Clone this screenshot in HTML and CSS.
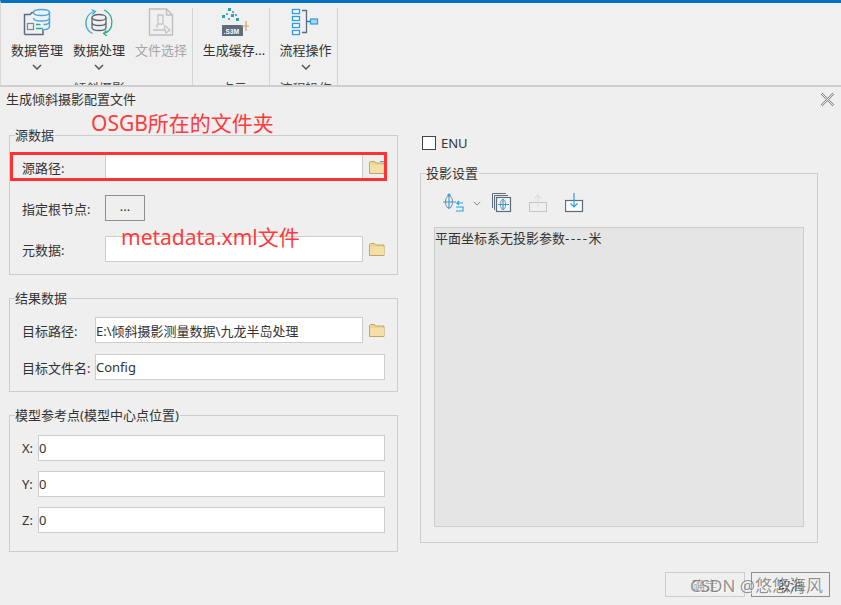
FILE: index.html
```html
<!DOCTYPE html>
<html lang="zh-CN">
<head>
<meta charset="utf-8">
<title>生成倾斜摄影配置文件</title>
<link rel="stylesheet" href="styles.css">
</head>
<body>
<div class="page">
  <header class="ribbon">
    <section class="rgroup g1">
      <div class="rbtns">
        <div class="rbtn">
          <svg class="ricon" viewBox="0 0 30 28"><path d="M2.500 26.500V6.500H8l2-2h6v3M2.500 26.500H21V15" fill="#f0f0f0" stroke="#5b6b80" stroke-width="1.500"/><rect x="5.500" y="15.500" width="6" height="6" fill="none" stroke="#7b8797" stroke-width="1.200"/><path d="M14 16.500h7M14 20.500h7" stroke="#27ae8f" stroke-width="1.400"/><path d="M11.500 4.500c0-4 16-4 16 0v14c0 2-3 3-6 3.200" fill="#f0f0f0" stroke="#42a9e0" stroke-width="1.400"/><path d="M11.500 4.500c0 4 16 4 16 0M11.500 10c0 4 16 4 16 0M21.500 16.500c3 0 6-1 6-3" fill="none" stroke="#42a9e0" stroke-width="1.400"/></svg>
          <span class="rlabel">数据管理</span>
          <svg class="chev" viewBox="0 0 10 6"><path d="M1 1l4 4 4-4" fill="none" stroke="#555" stroke-width="1.500"/></svg>
        </div>
        <div class="rbtn">
          <svg class="ricon" viewBox="0 0 30 28"><path d="M10 3.500C3 6 .5 13 2.500 19c1 3 3 5 6 6.500" fill="none" stroke="#42a9e0" stroke-width="1.300"/><path d="M7.500 1.500l4 2-3 3" fill="none" stroke="#42a9e0" stroke-width="1.300"/><path d="M20 2c7 3 9 10 7.500 16-1 3.500-3.500 6-7 7.500" fill="none" stroke="#27ae8f" stroke-width="1.300"/><path d="M23 28l-3.500-2.500 3-3" fill="none" stroke="#27ae8f" stroke-width="1.300"/><ellipse cx="15" cy="9.500" rx="7" ry="3" fill="none" stroke="#5b6570" stroke-width="1.300"/><path d="M8 9.500v10c0 4 14 4 14 0v-10M8 14.500c0 4 14 4 14 0" fill="none" stroke="#5b6570" stroke-width="1.300"/></svg>
          <span class="rlabel">数据处理</span>
          <svg class="chev" viewBox="0 0 10 6"><path d="M1 1l4 4 4-4" fill="none" stroke="#555" stroke-width="1.500"/></svg>
        </div>
        <div class="rbtn">
          <svg class="ricon" viewBox="0 0 30 28"><path d="M3.500 1h17l6 6v20h-23zM20.500 1v6h6" fill="none" stroke="#bdbdbd" stroke-width="1.300"/><path d="M12 7h5v9h-5zM11 16v4M7 22h13M18 17l6 5-4 3-2-6" fill="none" stroke="#c4c4c4" stroke-width="1.300"/></svg>
          <span class="rlabel off">文件选择</span>
        </div>
      </div>
      <span class="rname">倾斜摄影</span>
    </section>
    <section class="rgroup g2">
      <div class="rbtns">
        <div class="rbtn wide">
          <svg class="ricon" viewBox="0 0 30 28"><g fill="#2aa79b"><rect x="9" y="0" width="3" height="3"/><rect x="3" y="7" width="3" height="3"/><rect x="12" y="6" width="3" height="3"/><rect x="17" y="10" width="3" height="3"/></g><g fill="#5aa9dc"><rect x="7" y="5" width="2" height="2"/><rect x="16" y="6" width="2" height="2"/><rect x="9" y="10" width="2" height="2"/><rect x="13" y="3" width="2" height="2"/></g><rect x="3" y="17" width="21" height="11" fill="#5d6b7b"/><text x="4.500" y="26" class="s3m">.S3M</text><path d="M27 13v10M22 18h10" stroke="#c9a36e" stroke-width="1.200"/></svg>
          <span class="rlabel">生成缓存...</span>
        </div>
      </div>
      <span class="rname">点云</span>
    </section>
    <section class="rgroup g3">
      <div class="rbtns">
        <div class="rbtn">
          <svg class="ricon" viewBox="0 0 30 28"><g fill="#fff" stroke="#2a9fe0" stroke-width="1.300"><rect x="1.500" y="1.500" width="7" height="4"/><rect x="1.500" y="8.500" width="7" height="4"/><rect x="1.500" y="15.500" width="7" height="4"/><rect x="1.500" y="22.500" width="7" height="4"/></g><path d="M11 2.500h4.500v22H11M15.500 13.500h4" fill="none" stroke="#5d6b7b" stroke-width="1.300"/><rect x="19.500" y="11" width="7" height="5" fill="#a9d6ee" stroke="#2a9fe0" stroke-width="1.200"/></svg>
          <span class="rlabel">流程操作</span>
          <svg class="chev" viewBox="0 0 10 6"><path d="M1 1l4 4 4-4" fill="none" stroke="#555" stroke-width="1.500"/></svg>
        </div>
      </div>
      <span class="rname">流程操作</span>
    </section>
  </header>

  <main class="dialog">
    <div class="titlebar">
      <span>生成倾斜摄影配置文件</span>
      <svg class="close" viewBox="0 0 15 15"><path d="M1.500 1.500l12 12M13.500 1.500l-12 12" stroke="#8a8a8a" stroke-width="2.400"/><path d="M1.500 1.500l12 12M13.500 1.500l-12 12" stroke="#f5f5f5" stroke-width=".9"/></svg>
    </div>

    <div class="columns">
      <div class="left">
        <section class="group src">
          <h2 class="gtitle">源数据</h2>
          <div class="row"><label class="lab w83">源路径:</label><input class="field" type="text"><svg class="folder" viewBox="0 0 16 14"><path d="M.5 13.500V2.500l1-1h4l1 1.500h8.500v10.500z" fill="#f0d68f" stroke="#bfa56b"/><path d="M1 5h14v8H1z" fill="#f4dfa6"/><path d="M11 1h4v1h-4z" fill="#3ab0e6"/></svg></div>
          <div class="row"><label class="lab w83">指定根节点:</label><button class="dots" type="button">...</button></div>
          <div class="row"><label class="lab w83">元数据:</label><input class="field" type="text"><svg class="folder" viewBox="0 0 16 14"><path d="M.5 13.500V2.500l1-1h4l1 1.500h8.500v10.500z" fill="#f0d68f" stroke="#bfa56b"/><path d="M1 5h14v8H1z" fill="#f4dfa6"/></svg></div>
        </section>
        <section class="group res">
          <h2 class="gtitle">结果数据</h2>
          <div class="row"><label class="lab w73">目标路径:</label><input class="field" type="text" value="E:\倾斜摄影测量数据\九龙半岛处理"><svg class="folder" viewBox="0 0 16 14"><path d="M.5 13.500V2.500l1-1h4l1 1.500h8.500v10.500z" fill="#f0d68f" stroke="#bfa56b"/><path d="M1 5h14v8H1z" fill="#f4dfa6"/></svg></div>
          <div class="row"><label class="lab w73">目标文件名:</label><input class="field" type="text" value="Config"></div>
        </section>
        <section class="group ref">
          <h2 class="gtitle">模型参考点(模型中心点位置)</h2>
          <div class="row"><label class="lab w16">X:</label><input class="field" type="text" value="0"></div>
          <div class="row"><label class="lab w16">Y:</label><input class="field" type="text" value="0"></div>
          <div class="row"><label class="lab w16">Z:</label><input class="field" type="text" value="0"></div>
        </section>
      </div>

      <div class="right">
        <div class="enu"><span class="check"></span><span>ENU</span></div>
        <section class="group proj">
          <h2 class="gtitle">投影设置</h2>
          <div class="tools">
            <svg class="tool t1" viewBox="0 0 22 20"><ellipse cx="6" cy="9" rx="3.500" ry="6" fill="none" stroke="#8a8f96" stroke-width="1.100"/><path d="M6 1v15M0 9h13M4.500 2.500L6 1l1.500 1.500" fill="none" stroke="#2a9fe0" stroke-width="1.100"/><path d="M20 10h-6l2-2M14 10l2 2M13 14h7v4h-7" fill="none" stroke="#2a9fe0" stroke-width="1.100"/></svg>
            <svg class="toolchev" viewBox="0 0 10 6"><path d="M1 1l4 4 4-4" fill="none" stroke="#777" stroke-width="1.100"/></svg>
            <svg class="tool t2" viewBox="0 0 20 20"><path d="M14 .5H.5V15" fill="none" stroke="#5d6b7b"/><path d="M16 2.500H2.500V17" fill="none" stroke="#5d6b7b"/><rect x="4.500" y="4.500" width="14" height="14" fill="#f4f4f4" stroke="#5d6b7b" stroke-width="1.200"/><ellipse cx="11" cy="11.500" rx="2.500" ry="5" fill="none" stroke="#8a8f96"/><path d="M11 6v11M6 11.500h11" fill="none" stroke="#2a9fe0" stroke-width="1.200"/></svg>
            <svg class="tool t3" viewBox="0 0 20 20"><rect x=".5" y="9.500" width="17" height="9" fill="none" stroke="#c4c4c4"/><path d="M9 14V2M5.500 5.500L9 2l3.500 3.500" fill="none" stroke="#dcdcdc" stroke-width="1.200"/></svg>
            <svg class="tool t4" viewBox="0 0 20 20"><rect x=".5" y="7.500" width="17" height="11" fill="#fbfbfb" stroke="#5d6b7b" stroke-width="1.200"/><path d="M9 0v14M5.500 10.500L9 14l3.500-3.500" fill="none" stroke="#2a9fe0" stroke-width="1.200"/></svg>
          </div>
          <div class="info">平面坐标系无投影参数<span class="dash">----</span>米</div>
        </section>
      </div>
    </div>

    <footer class="footer">
      <button class="btn off" type="button">确定</button>
      <button class="btn" type="button">取消</button>
    </footer>
  </main>

  <div class="note n-osgb">OSGB所在的文件夹</div>
  <div class="note n-meta">metadata.xml文件</div>
  <div class="redbox"></div>
  <div class="mark">CSDN @悠悠海风</div>
</div>
</body>
</html>
```
FILE: styles.css
```css
* { box-sizing: border-box; }
html, body { margin: 0; padding: 0; }
body {
  font-family: "Noto Sans", "Noto Sans CJK SC", sans-serif;
  font-size: 13px;
  color: #333;
  background: #efefef;
}
.page { position: relative; width: 841px; height: 605px; overflow: hidden; }

/* ribbon */
.ribbon {
  display: flex;
  height: 87px;
  padding-top: 5px;
  background: #f0f0f0;
  border-top: 3px solid #0072c6;
  border-bottom: 2px solid #cfcfcf;
  border-left: 1px solid #d8d8d8;
  overflow: hidden;
}
.rgroup {
  display: flex;
  flex-direction: column;
  align-items: center;
  border-right: 1px solid #d4d4d4;
  height: 85px;
}
.g1 { width: 192px; padding-left: 5px; }
.g2 { width: 77px; padding-left: 6px; }
.g3 { width: 68px; padding-left: 4px; }
.rbtns { display: flex; flex: none; height: 71px; }
.rbtn { display: flex; flex-direction: column; align-items: center; width: 62px; }
.rbtn.wide { width: 70px; }
.ricon { width: 30px; height: 28px; flex: none; }
.rlabel { line-height: 18px; margin-top: 5px; white-space: nowrap; }
.rlabel.off { color: #a6a6a6; }
.chev { width: 10px; height: 6px; margin-top: 5px; }
.rname { flex: none; line-height: 18px; color: #444; white-space: nowrap; }
.s3m { font: 700 6.500px "Liberation Sans", sans-serif; fill: #fff; letter-spacing: .2px; }

/* dialog */
.titlebar {
  display: flex;
  justify-content: space-between;
  align-items: center;
  height: 25px;
  padding: 0 6px;
  line-height: 25px;
}
.titlebar span { margin-top: -1px; }
.close { width: 15px; height: 15px; }
.columns { display: flex; padding-left: 9px; }
.left { display: flex; flex-direction: column; gap: 23px; width: 389px; padding-top: 23px; }
.right { width: 398px; margin-left: 22px; padding-top: 24px; }

.group { border: 1px solid #cdcdcd; padding: 0 12px; }
.gtitle {
  width: fit-content;
  margin: -10px 0 0 -7px;
  padding: 0 1px 0 0;
  height: 18px;
  line-height: 18px;
  font-size: 13px;
  font-weight: 400;
  background: #efefef;
}
.row { display: flex; align-items: center; height: 26px; }
.lab { flex: none; white-space: nowrap; }
.w83 { width: 83px; }
.w73 { width: 73px; }
.w16 { width: 16px; }
.field {
  flex: 1;
  min-width: 0;
  height: 26px;
  padding: 0;
  border: 1px solid #cdcdcd;
  background: #fff;
  color: #333;
  font: 13px "Noto Sans", "Noto Sans CJK SC", sans-serif;
}
.folder { flex: none; width: 16px; height: 14px; margin-left: 6px; }
.dots {
  width: 40px;
  height: 26px;
  padding: 0 0 4px;
  border: 1px solid #8f8f8f;
  background: #efefef;
  color: #333;
  font: 13px "Noto Sans", sans-serif;
}

.gtitle + .row { margin-top: 10px; }
.src { height: 140px; }
.src .row + .row { margin-top: 15px; }
.res { height: 94px; }
.res .row + .row { margin-top: 11px; }
.ref { height: 137px; }
.ref .gtitle + .row { margin-top: 11px; }
.ref .row + .row { margin-top: 10px; }

.enu { display: flex; align-items: center; gap: 5px; height: 14px; padding-left: 2px; }
.check { width: 14px; height: 14px; background: #fff; border: 1px solid #444; }
.proj { height: 370px; margin-top: 23px; padding: 0 13px; }
.proj .gtitle { margin-left: -8px; }
.tools { display: flex; align-items: flex-start; height: 45px; padding: 11px 0 0 9px; }
.tool { flex: none; width: 20px; height: 20px; }
.t1 { width: 22px; }
.toolchev { width: 8px; height: 5px; margin: 8px 0 0 8px; }
.t2 { margin-left: 11px; }
.t3 { margin-left: 17px; }
.t4 { margin-left: 16px; }
.info {
  height: 300px;
  padding: 1px 0 0;
  line-height: 18px;
  background: #e5e5e5;
  border: 1px solid #cdcdcd;
}
.dash { letter-spacing: 1.700px; }

.footer { display: flex; justify-content: flex-end; gap: 6px; margin-top: 20px; padding-right: 11px; }
.btn {
  width: 79px;
  height: 25px;
  padding: 0;
  border: 1px solid #8f8f8f;
  background: #efefef;
  color: #333;
  font: 13px "Noto Sans CJK SC", sans-serif;
}
.btn.off { width: 80px; border-color: #cdcdcd; color: #a6a6a6; }

/* overlaid annotations */
.note { position: absolute; color: #ff3b3b; font-size: 21px; line-height: 24px; white-space: nowrap; }
.n-osgb { left: 91px; top: 111px; }
.n-meta { left: 121px; top: 225px; }
.redbox { position: absolute; left: 10px; top: 152px; width: 377px; height: 29px; border: 3px solid #ff3333; }
.mark {
  position: absolute;
  left: 690px;
  top: 574px;
  font-size: 17px;
  line-height: 24px;
  color: rgba(90, 90, 90, .65);
  text-shadow: 1px 1px 0 rgba(255, 255, 255, .7);
  white-space: nowrap;
}
```
